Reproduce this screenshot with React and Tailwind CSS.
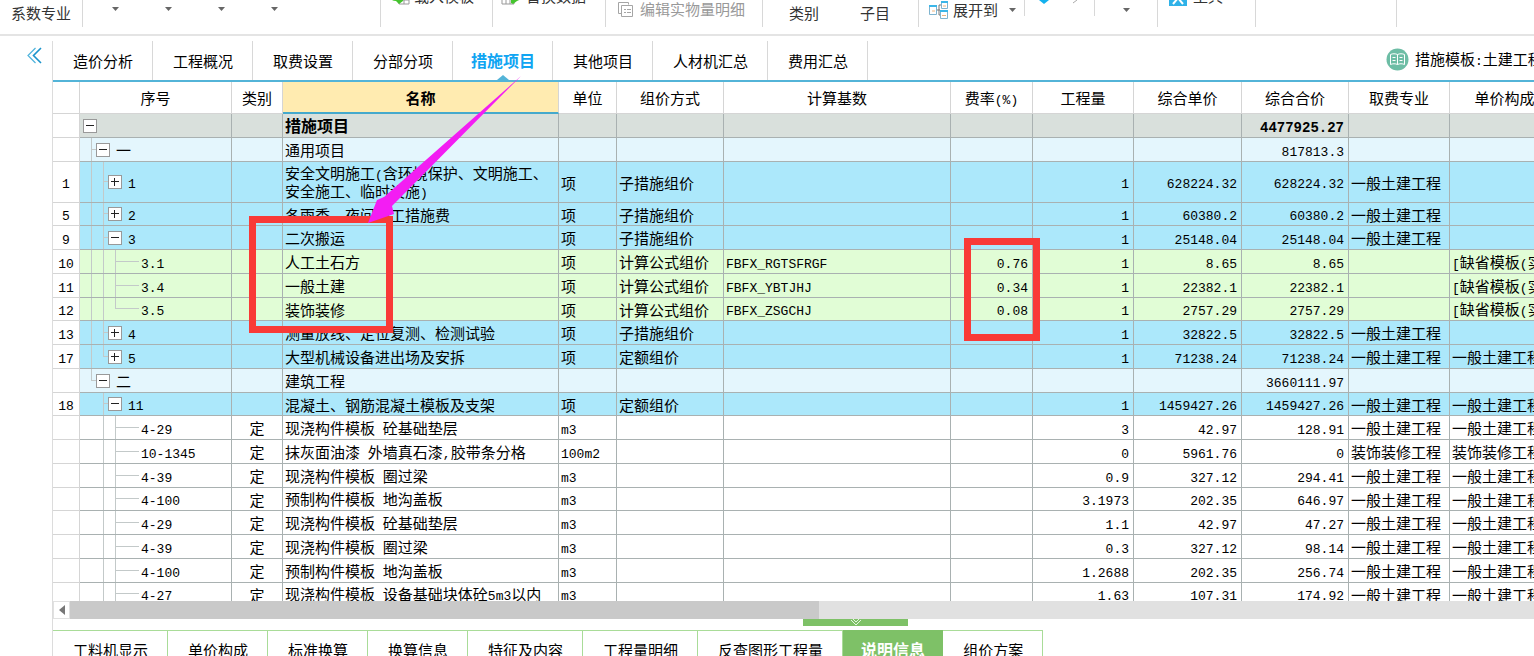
import React, { useState } from 'react';

const mainTabs = ['造价分析', '工程概况', '取费设置', '分部分项', '措施项目', '其他项目', '人材机汇总', '费用汇总'];

const detailTabs = ['工料机显示', '单价构成', '标准换算', '换算信息', '特征及内容', '工程量明细', '反查图形工程量', '说明信息', '组价方案'];

const columns = [
  { title: '', width: 'w-[27px]' },
  { title: '序号', width: 'w-[152px]' },
  { title: '类别', width: 'w-[51px]' },
  { title: '名称', width: 'w-[276px]' },
  { title: '单位', width: 'w-[58px]' },
  { title: '组价方式', width: 'w-[107px]' },
  { title: '计算基数', width: 'w-[227px]' },
  { title: '费率(%)', width: 'w-[82px]' },
  { title: '工程量', width: 'w-[101px]' },
  { title: '综合单价', width: 'w-[108px]' },
  { title: '综合合价', width: 'w-[107px]' },
  { title: '取费专业', width: 'w-[101px]' },
  { title: '单价构成文件', width: 'w-[140px]' }
];

const general = '一般土建工程';
const decoration = '装饰装修工程';
const template = '[缺省模板(实物量)]';

// guides: one letter per indent level, f = full line, h = line ends here, n = no line
const rows = [
  { kind: 'total', guides: '', toggle: '-', name: '措施项目', total: '4477925.27' },
  { kind: 'part', guides: 'f', toggle: '-', code: '一', name: '通用项目', total: '817813.3' },
  { kind: 'group', no: '1', guides: 'ff', toggle: '+', code: '1', name: '安全文明施工(含环境保护、文明施工、安全施工、临时设施)', unit: '项', method: '子措施组价', qty: '1', price: '628224.32', total: '628224.32', major: general, tall: true },
  { kind: 'group', no: '5', guides: 'ff', toggle: '+', code: '2', name: '冬雨季、夜间施工措施费', unit: '项', method: '子措施组价', qty: '1', price: '60380.2', total: '60380.2', major: general },
  { kind: 'group', no: '9', guides: 'ff', toggle: '-', code: '3', name: '二次搬运', unit: '项', method: '子措施组价', qty: '1', price: '25148.04', total: '25148.04', major: general },
  { kind: 'formula', no: '10', guides: 'fff', code: '3.1', name: '人工土石方', unit: '项', method: '计算公式组价', base: 'FBFX_RGTSFRGF', rate: '0.76', qty: '1', price: '8.65', total: '8.65', file: template },
  { kind: 'formula', no: '11', guides: 'fff', code: '3.4', name: '一般土建', unit: '项', method: '计算公式组价', base: 'FBFX_YBTJHJ', rate: '0.34', qty: '1', price: '22382.1', total: '22382.1', file: template },
  { kind: 'formula', no: '12', guides: 'ffh', code: '3.5', name: '装饰装修', unit: '项', method: '计算公式组价', base: 'FBFX_ZSGCHJ', rate: '0.08', qty: '1', price: '2757.29', total: '2757.29', file: template },
  { kind: 'group', no: '13', guides: 'ff', toggle: '+', code: '4', name: '测量放线、定位复测、检测试验', unit: '项', method: '子措施组价', qty: '1', price: '32822.5', total: '32822.5', major: general },
  { kind: 'group', no: '17', guides: 'fh', toggle: '+', code: '5', name: '大型机械设备进出场及安拆', unit: '项', method: '定额组价', qty: '1', price: '71238.24', total: '71238.24', major: general, file: general },
  { kind: 'part', guides: 'h', toggle: '-', code: '二', name: '建筑工程', total: '3660111.97' },
  { kind: 'group', no: '18', guides: 'nf', toggle: '-', code: '11', name: '混凝土、钢筋混凝土模板及支架', unit: '项', method: '定额组价', qty: '1', price: '1459427.26', total: '1459427.26', major: general, file: general },
  { kind: 'item', guides: 'nff', code: '4-29', type: '定', name: '现浇构件模板 砼基础垫层', unit: 'm3', qty: '3', price: '42.97', total: '128.91', major: general, file: general },
  { kind: 'item', guides: 'nff', code: '10-1345', type: '定', name: '抹灰面油漆 外墙真石漆,胶带条分格', unit: '100m2', qty: '0', price: '5961.76', total: '0', major: decoration, file: decoration },
  { kind: 'item', guides: 'nff', code: '4-39', type: '定', name: '现浇构件模板 圈过梁', unit: 'm3', qty: '0.9', price: '327.12', total: '294.41', major: general, file: general },
  { kind: 'item', guides: 'nff', code: '4-100', type: '定', name: '预制构件模板 地沟盖板', unit: 'm3', qty: '3.1973', price: '202.35', total: '646.97', major: general, file: general },
  { kind: 'item', guides: 'nff', code: '4-29', type: '定', name: '现浇构件模板 砼基础垫层', unit: 'm3', qty: '1.1', price: '42.97', total: '47.27', major: general, file: general },
  { kind: 'item', guides: 'nff', code: '4-39', type: '定', name: '现浇构件模板 圈过梁', unit: 'm3', qty: '0.3', price: '327.12', total: '98.14', major: general, file: general },
  { kind: 'item', guides: 'nff', code: '4-100', type: '定', name: '预制构件模板 地沟盖板', unit: 'm3', qty: '1.2688', price: '202.35', total: '256.74', major: general, file: general },
  { kind: 'item', guides: 'nff', code: '4-27', type: '定', name: '现浇构件模板 设备基础块体砼5m3以内', unit: 'm3', qty: '1.63', price: '107.31', total: '174.92', major: general, file: general }
];

const rowColors = {
  total: 'bg-[#d9e0dc]',
  part: 'bg-[#e4f6fd]',
  group: 'bg-[#ace8fb]',
  formula: 'bg-[#e1fdd6]',
  item: 'bg-white'
};

// Latin runs are set in the narrow mono face, the rest stays in the CJK face
const Mixed = ({ text = '', big = false }) => (
  <>
    {text.split(/([\x20-\x7e]+)/).map((part, i) =>
      i % 2 ? (
        <span key={i} className={`font-['Liberation_Mono',monospace] leading-none ${big ? 'text-[14px]' : 'text-[13px]'}`}>{part}</span>
      ) : part
    )}
  </>
);

const Caret = ({ label }) => (
  <button aria-label={label} className="flex h-5 w-4 shrink-0 items-center justify-center">
    <svg width="7" height="4" viewBox="0 0 7 4"><path d="M0 0h7L3.500 4z" fill="#666" /></svg>
  </button>
);

const RibbonGroup = ({ className, children }) => (
  <div className={`flex h-[27px] shrink-0 items-end border-r border-[#d8d8d8] ${className}`}>{children}</div>
);

const ImportIcon = () => (
  <svg width="21" height="18" viewBox="0 0 21 18">
    <path d="M10 5h10v12H10z" fill="#fff" stroke="#999" />
    <path d="M10 9h10M10 13h10M15 5v12" stroke="#999" />
    <path d="M1 9c0-5 12-6 13 0v5l-4 3-3-3c-4 0-6-2-6-5z" fill="#45c42e" />
  </svg>
);

const ReplaceIcon = () => (
  <svg width="21" height="18" viewBox="0 0 21 18">
    <path d="M1 3h12v14H1z" fill="#fff" stroke="#999" />
    <path d="M1 8h12M1 12h12M5 3v14M9 3v14" stroke="#999" />
    <path d="M9 9l6-5 5 4c1 3-1 5-4 6l-4 3-2-1v-3z" fill="#45c42e" />
  </svg>
);

const SheetsIcon = () => (
  <svg width="16" height="15" viewBox="0 0 16 15" fill="none" stroke="#a5a5a5">
    <path d="M3.500 11.500h-3v-11h10v2" />
    <path d="M3.500 3.500h11v11h-11z" fill="#fff" />
    <path d="M6 7.500h2m1 0h4M6 10.500h2m1 0h4" />
  </svg>
);

const ExpandIcon = () => (
  <svg width="20" height="18" viewBox="0 0 20 18">
    <path d="M8 9h3M10 4v10M10 4h2M10 14h2" stroke="#777" fill="none" />
    <path d="M.5 5.500h7v8h-7zM12.500 1.500h6v6h-6zM11.500 10.500h7v7h-7z" fill="#fff" stroke="#7fb4cf" />
    <path d="M0 4h8v2H0zM12 0h7v2h-7zM11 9h8v2h-8z" fill="#3cb6e8" />
    <path d="M3 10h3M14 5h3M13 14.500h4" stroke="#efb37c" />
  </svg>
);

const Ribbon = () => (
  <header className="flex h-9 shrink-0 overflow-hidden border-b-2 border-[#e4e4e4] text-[#333]">
    <RibbonGroup className="w-[83px] pb-1 pl-[11px]">
      <button className="h-5 leading-5">系数专业</button>
    </RibbonGroup>
    <RibbonGroup className="w-[298px] gap-[37px] pb-2 pl-6">
      <Caret label="更多选项一" />
      <Caret label="更多选项二" />
      <Caret label="更多选项三" />
      <Caret label="更多选项四" />
    </RibbonGroup>
    <RibbonGroup className="w-[112px] pb-[21px] pl-2">
      <button className="flex h-5 items-center gap-1 leading-5"><ImportIcon />载入模板</button>
    </RibbonGroup>
    <RibbonGroup className="w-[113px] pb-[21px] pl-2">
      <button className="flex h-5 items-center gap-1 leading-5"><ReplaceIcon />替换数据</button>
    </RibbonGroup>
    <RibbonGroup className="w-[157px] pb-2 pl-3">
      <button className="flex h-5 items-center gap-[6px] leading-5 text-[#999]"><SheetsIcon />编辑实物量明细</button>
    </RibbonGroup>
    <RibbonGroup className="w-[156px] justify-between pb-1 pl-[26px] pr-7">
      <button className="h-5 leading-5">类别</button>
      <button className="h-5 leading-5">子目</button>
    </RibbonGroup>
    <div className="flex h-4 shrink-0 items-center gap-[6px] border-r border-[#d8d8d8] pl-[10px] pr-1 pt-1">
      <button className="flex h-5 items-center gap-1 leading-5"><ExpandIcon />展开到</button>
      <Caret label="展开到选项" />
    </div>
    <div className="flex h-4 w-[70px] shrink-0 items-start justify-between border-r border-[#d8d8d8] pl-3 pr-4">
      <svg width="14" height="5" viewBox="0 0 14 5"><path d="M2 0h10L7 4z" fill="#13b1ee" /></svg>
      <svg width="6" height="4" viewBox="0 0 6 4"><path d="M5 0L1 3" stroke="#aaa" /></svg>
    </div>
    <RibbonGroup className="w-[63px] pb-[7px] pl-[23px]">
      <Caret label="更多选项五" />
    </RibbonGroup>
    <RibbonGroup className="w-[98px] pb-[21px] pl-[11px]">
      <button className="flex h-5 items-end gap-[6px] leading-5">
        <svg width="18" height="20" viewBox="0 0 18 20"><path d="M0 0h18v20H0z" fill="#2fb2e8" /><path d="M4 6l10 12M14 6L4 18" stroke="#fff" strokeWidth="2" /></svg>
        工具
      </button>
    </RibbonGroup>
    <RibbonGroup className="w-[141px]" />
  </header>
);

const Toggle = ({ sign }) => (
  <button aria-label={sign === '+' ? '展开' : '折叠'} className="flex h-[14px] w-[14px] shrink-0 items-center justify-center border border-[#999] bg-white">
    <svg width="8" height="8" viewBox="0 0 8 8">
      <path d={sign === '+' ? 'M0 3.500h8M3.500 0v8' : 'M0 3.500h8'} stroke="#222" />
    </svg>
  </button>
);

const TreeCell = ({ row }) => (
  <div className={`flex h-full items-center ${row.guides ? 'pl-[11px]' : 'pl-[3px]'}`}>
    {row.guides.split('').map((g, i, all) => {
      const last = i === all.length - 1;
      const width = !last ? 'w-3' : row.toggle ? 'w-[5px]' : 'w-6';
      return (
        <span key={i} className={`flex h-full shrink-0 flex-col ${width}`}>
          <span className={`h-1/2 border-[#c3c9c9] ${g !== 'n' ? 'border-l' : ''} ${last ? 'border-b' : ''}`}></span>
          <span className={`h-1/2 border-[#c3c9c9] ${g === 'f' ? 'border-l' : ''}`}></span>
        </span>
      );
    })}
    {row.toggle && <Toggle sign={row.toggle} />}
    <span className={row.toggle ? 'pl-[6px]' : 'pl-[2px]'}><Mixed text={row.code} /></span>
  </div>
);

const MeasureTable = () => {
  const cell = 'h-[inherit] overflow-hidden border-b border-r border-[#a9b1b1] p-0 pl-[2px]';
  const text = `${cell} whitespace-nowrap text-left`;
  const number = `${cell} whitespace-nowrap pr-1 text-right`;

  return (
    <table className="w-[1537px] min-w-full table-fixed border-separate border-spacing-0">
      <colgroup>
        {columns.map((col) => <col key={col.title} className={col.width} />)}
      </colgroup>
      <thead>
        <tr className="h-8">
          {columns.map((col) => (
            <th
              key={col.title}
              className={`border-r p-0 whitespace-nowrap ${
                col.title === '名称'
                  ? 'border-b-2 border-r-[#d5d5d5] border-b-[#45a9cc] bg-[#ffebb0] font-bold'
                  : 'border-b border-[#d5d5d5] bg-white font-normal'
              }`}
            >
              <Mixed text={col.title} />
            </th>
          ))}
        </tr>
      </thead>
      <tbody>
        {rows.map((row, i) => (
          <tr key={i} className={`${rowColors[row.kind]} ${row.tall ? 'h-[41px]' : 'h-6 nth-[4n]:h-[23px]'}`}>
            <td className="border-b border-r border-[#d5d5d5] bg-white p-0 text-center"><Mixed text={row.no} /></td>
            <td className="h-[inherit] border-b border-r border-[#a9b1b1] p-0"><TreeCell row={row} /></td>
            <td className={`${cell} pr-[2px] text-center`}>{row.type}</td>
            <td className={`${cell} ${row.tall ? '' : 'whitespace-nowrap'} ${row.kind === 'total' ? 'text-[16px] font-bold' : ''}`}>
              <Mixed text={row.name} />
            </td>
            <td className={text}><Mixed text={row.unit} /></td>
            <td className={text}><Mixed text={row.method} /></td>
            <td className={text}><Mixed text={row.base} /></td>
            <td className={number}><Mixed text={row.rate} /></td>
            <td className={number}><Mixed text={row.qty} /></td>
            <td className={number}><Mixed text={row.price} /></td>
            <td className={`${number} ${row.kind === 'total' ? 'font-bold' : ''}`}>
              <Mixed text={row.total} big={row.kind === 'total'} />
            </td>
            <td className={text}><Mixed text={row.major} /></td>
            <td className={text}><Mixed text={row.file} /></td>
          </tr>
        ))}
      </tbody>
    </table>
  );
};

const App = () => {
  const [activeTab, setActiveTab] = useState('措施项目');
  const [activeDetail, setActiveDetail] = useState('说明信息');

  return (
    <div className="relative flex h-screen flex-col overflow-hidden bg-white font-['Noto_Sans_CJK_SC',sans-serif] text-[15px] leading-[17px] text-black">
      <Ribbon />

      <div className="flex min-h-0 flex-1">
        {/* Collapsed side panel */}
        <aside className="w-[53px] shrink-0 pt-[5px]">
          <div className="flex h-full items-start justify-end border-r border-[#dcdcdc] pr-[10px] pt-[6px]">
            <button aria-label="展开侧栏">
              <svg width="15" height="17" viewBox="0 0 15 17" fill="none">
                <path d="M8.500 1L1 8.500L8.500 16" stroke="#4fb3dc" strokeWidth="1.200" />
                <path d="M14 1L6.500 8.500L14 16" stroke="#1c94cc" strokeWidth="1.600" />
              </svg>
            </button>
          </div>
        </aside>

        <main className="flex min-w-0 flex-1 flex-col">
          {/* Main tabs */}
          <div className="flex h-[46px] shrink-0 items-end border-b-2 border-[#53b4d8]">
            {mainTabs.map((tab) => (
              <button
                key={tab}
                onClick={() => setActiveTab(tab)}
                className={`relative h-[39px] shrink-0 border-r border-[#d8d8d8] whitespace-nowrap ${
                  tab === activeTab ? 'px-[18px] pb-px pr-[17px] text-[16px] font-bold text-[#10a5f2]' : 'pl-5 pr-[19px]'
                }`}
              >
                {tab}
                {tab === activeTab && (
                  <svg className="absolute bottom-0 left-1/2 -translate-x-1/2" width="12" height="5" viewBox="0 0 12 5">
                    <path d="M0 5L6 0l6 5z" fill="#53b4d8" />
                  </svg>
                )}
              </button>
            ))}
            <div className="ml-auto flex h-[42px] w-[148px] shrink-0 items-center gap-[6px]">
              <svg className="shrink-0" width="23" height="23" viewBox="0 0 23 23">
                <circle cx="11.500" cy="11.500" r="11" fill="#6dbda5" />
                <path d="M4.500 6.500c2-1 5-1 7 0 2-1 5-1 7 0v10c-2-1-5-1-7 0-2-1-5-1-7 0zM11.500 6.500v10M6.500 9.500h3M6.500 12.500h3M13.500 9.500h3M13.500 12.500h3" fill="none" stroke="#fff" />
              </svg>
              <span className="whitespace-nowrap"><Mixed text="措施模板:土建工程" /></span>
            </div>
          </div>

          <div className="min-h-0 flex-1 overflow-hidden">
            <MeasureTable />
          </div>

          {/* Horizontal scrollbar */}
          <div className="flex h-[18px] shrink-0 bg-[#e1e1e1]">
            <button aria-label="向左滚动" className="flex w-[17px] items-center justify-center border border-[#e1e1e1] bg-white">
              <svg width="6" height="10" viewBox="0 0 6 10"><path d="M6 0v10L0 5z" fill="#777" /></svg>
            </button>
            <div className="w-[749px] bg-[#c9c9c9]"></div>
          </div>
          <div className="h-[11px] shrink-0">
            <button aria-label="收起明细" className="ml-[750px] flex h-[7px] w-[105px] items-center justify-center bg-[#7ec167]">
              <svg width="12" height="7" viewBox="0 0 12 7"><path d="M1 1l5 5 5-5M3 0l3 3 3-3" fill="none" stroke="#e6f5e0" /></svg>
            </button>
          </div>

          {/* Detail tabs */}
          <div className="flex h-[26px] shrink-0 overflow-hidden">
            {detailTabs.map((tab) => (
              <button
                key={tab}
                onClick={() => setActiveDetail(tab)}
                className={`h-[38px] shrink-0 border-r border-t whitespace-nowrap ${
                  tab === activeDetail
                    ? 'border-[#7ec167] bg-[#7ec167] pl-[18px] pr-[17px] text-[16px] font-bold text-white'
                    : 'border-[#a9dc98] pl-5 pr-[19px]'
                }`}
              >
                {tab}
              </button>
            ))}
          </div>
        </main>
      </div>

      {/* Annotations */}
      <div className="pointer-events-none absolute left-[249px] top-[216px] h-[117px] w-[144px] border-[7px] border-[#f93a37]"></div>
      <div className="pointer-events-none absolute left-[964px] top-[238px] h-[103px] w-[76px] border-[7px] border-[#f93a37]"></div>
      <svg className="pointer-events-none absolute left-[368px] top-[76px]" width="154" height="148" viewBox="0 0 154 148">
        <path d="M153 0L16 121L9 124L0 147L26 138L24 130Z" fill="#f31df3" />
      </svg>
    </div>
  );
};

export default App;
